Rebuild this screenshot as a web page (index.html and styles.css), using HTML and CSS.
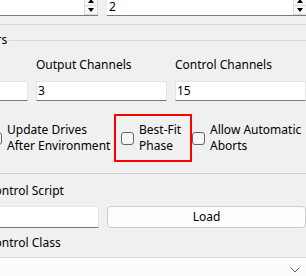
FILE: index.html
```html
<!DOCTYPE html>
<html>
<head>
<meta charset="utf-8">
<link rel="stylesheet" href="styles.css">
</head>
<body>
<div class="page">
  <div class="spinrow">
    <div class="spin spin-a">
      <span class="val"></span>
      <div class="spin-btns"><div class="sb up"><i></i></div><div class="sb down"><i></i></div></div>
    </div>
    <div class="spin spin-b">
      <span class="val">2</span>
      <div class="spin-btns"><div class="sb up"><i></i></div><div class="sb down"><i></i></div></div>
    </div>
  </div>
  <div class="hr top-hr"></div>
  <div class="legend"><span class="legend-text">Parameters</span><span class="legend-line"></span></div>
  <div class="grid labels">
    <div class="lbl"></div>
    <div class="lbl">Output Channels</div>
    <div class="lbl">Control Channels</div>
  </div>
  <div class="grid inputs">
    <div class="tb"><span class="val"></span></div>
    <div class="tb"><span class="val">3</span></div>
    <div class="tb"><span class="val">15</span></div>
  </div>
  <div class="checks">
    <div class="chk item1"><span class="box"></span><span class="ctext">Update Drives<br>After Environment</span></div>
    <div class="chk item2 highlight"><span class="box"></span><span class="ctext">Best-Fit<br>Phase</span></div>
    <div class="chk item3"><span class="box"></span><span class="ctext">Allow Automatic<br>Aborts</span></div>
  </div>
  <div class="hr sep"></div>
  <div class="lbl sec-lbl">Control Script</div>
  <div class="script-row">
    <div class="tb script-tb"></div>
    <div class="btn">Load</div>
  </div>
  <div class="lbl sec-lbl2">Control Class</div>
  <div class="combo"><svg class="chev" width="10" height="6" viewBox="0 0 10 6"><polyline points="0.5,0.5 5,5 9.5,0.5" fill="none" stroke="#606060" stroke-width="1"/></svg></div>
</div>
</body>
</html>
```
FILE: styles.css
```css
html, body {
  margin: 0;
  padding: 0;
  background: #f0f0f0;
}
body {
  width: 306px;
  height: 276px;
  overflow: hidden;
  font-family: "Noto Sans", "Open Sans", sans-serif;
  font-size: 12px;
  line-height: 16px;
  color: #000;
}
.page {
  margin-left: -13px;
  width: 340px;
}
.lbl {
  height: 16px;
  white-space: nowrap;
}
.spinrow {
  display: flex;
  gap: 9px;
  margin-top: -5px;
  height: 21px;
}
.spin {
  position: relative;
  box-sizing: border-box;
  height: 21px;
  background: #fff;
  border-bottom: 1px solid #7a7a7a;
  display: flex;
  align-items: center;
  padding-left: 2px;
}
.spin-a { width: 111px; }
.spin-b { width: 200px; }
.spin .val { flex: 1; padding-top: 4px; }
.spin-btns {
  width: 14px;
  height: 20px;
  display: flex;
  flex-direction: column;
}
.sb {
  flex: 1;
  box-sizing: border-box;
  border: 1px solid #dcdcdc;
  background: #f7f7f7;
  display: flex;
  align-items: center;
  justify-content: center;
}
.sb.up { border-bottom: none; }
.sb i {
  width: 0;
  height: 0;
  border-left: 3px solid transparent;
  border-right: 3px solid transparent;
}
.sb.up i { border-bottom: 4px solid #000; margin-top: 2px; }
.sb.down i { border-top: 4px solid #000; }
.hr {
  height: 0;
  border-top: 1px solid #d9d9d9;
}
.top-hr { margin-top: 8px; }
.legend {
  display: flex;
  align-items: center;
  height: 16px;
  margin-top: 7px;
}
.legend-text { margin-left: -45px; }
.legend-line {
  flex: 1;
  height: 0;
  border-top: 1px solid #d9d9d9;
  margin-left: 2px;
}
.grid {
  display: grid;
  grid-template-columns: 41px 131px 131px;
  column-gap: 8px;
}
.labels { margin-top: 9px; }
.inputs { margin-top: 8px; }
.tb {
  box-sizing: border-box;
  height: 20px;
  background: #fff;
  border: 1px solid #e4e4e4;
  border-bottom-color: #7a7a7a;
  padding-left: 1px;
  line-height: 16px;
  padding-top: 1px;
}
.checks {
  display: flex;
  margin-top: 13px;
  margin-left: 2px;
  height: 48px;
}
.chk {
  box-sizing: border-box;
  display: flex;
  align-items: center;
  gap: 5px;
}
.item1 { width: 125px; }
.item2 { width: 78px; padding-left: 5px; }
.item3 { flex: 1; }
.highlight { border: 2px solid #ff0000; }
.box {
  box-sizing: border-box;
  width: 13px;
  height: 13px;
  flex: none;
  border: 1px solid #666;
  border-radius: 3px;
  background: #f6f6f6;
}
.ctext { white-space: nowrap; }
.sep { margin-top: 11px; border-top-color: #d2d2d2; }
.sec-lbl { margin-top: 9px; }
.script-row {
  display: flex;
  gap: 8px;
  margin-top: 7px;
  height: 22px;
}
.script-tb { width: 112px; height: 22px; }
.btn {
  box-sizing: border-box;
  width: 199px;
  height: 22px;
  background: #fdfdfd;
  border: 1px solid #cccccc;
  border-radius: 4px;
  display: flex;
  align-items: center;
  justify-content: center;
}
.sec-lbl2 { margin-top: 7px; }
.combo {
  position: relative;
  box-sizing: border-box;
  margin-top: 6px;
  width: 340px;
  height: 30px;
  background: #fcfcfc;
  border-top: 1px solid #d9d9d9;
}
.chev {
  position: absolute;
  left: 303px;
  top: 9px;
}
```
